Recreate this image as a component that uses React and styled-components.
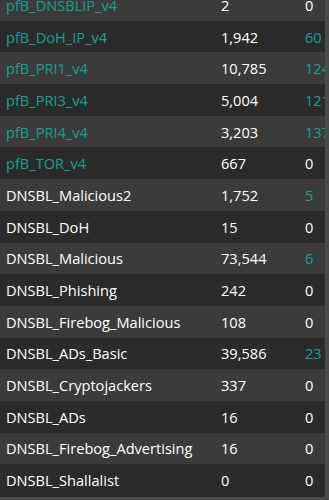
import React from "react";
import styled, { createGlobalStyle } from "styled-components";

const GlobalStyle = createGlobalStyle`
  html, body {
    margin: 0;
    padding: 0;
    background: #4a4a4a;
  }
`;

const Frame = styled.div`
  width: 325px;
  height: 497px;
  overflow: hidden;
  background: #2b2b2b;
  font-family: "Open Sans", "Noto Sans", sans-serif;
  font-size: 14.6px;
`;

const Table = styled.div`
  margin-top: -11px;
`;

const Row = styled.div`
  display: grid;
  grid-template-columns: 215px 84px 40px;
  align-items: center;
  height: 31.7px;
  padding-left: 6px;
  background: ${({ odd }) => (odd ? "#3b3b3b" : "#2b2b2b")};
  white-space: nowrap;
`;

const Cell = styled.span`
  color: ${({ teal }) => (teal ? "#14a091" : "#ffffff")};
  overflow: hidden;
`;

const rows = [
  ["pfB_DNSBLIP_v4", "2", "0", true],
  ["pfB_DoH_IP_v4", "1,942", "60", true],
  ["pfB_PRI1_v4", "10,785", "124", true],
  ["pfB_PRI3_v4", "5,004", "121", true],
  ["pfB_PRI4_v4", "3,203", "137", true],
  ["pfB_TOR_v4", "667", "0", true],
  ["DNSBL_Malicious2", "1,752", "5", false],
  ["DNSBL_DoH", "15", "0", false],
  ["DNSBL_Malicious", "73,544", "6", false],
  ["DNSBL_Phishing", "242", "0", false],
  ["DNSBL_Firebog_Malicious", "108", "0", false],
  ["DNSBL_ADs_Basic", "39,586", "23", false],
  ["DNSBL_Cryptojackers", "337", "0", false],
  ["DNSBL_ADs", "16", "0", false],
  ["DNSBL_Firebog_Advertising", "16", "0", false],
  ["DNSBL_Shallalist", "0", "0", false],
];

export default function App() {
  return (
    <>
      <GlobalStyle />
      <Frame>
        <Table>
          {rows.map(([name, count, hits, pfb], i) => (
            <Row key={name} odd={i % 2 === 0}>
              <Cell teal={pfb}>{name}</Cell>
              <Cell>{count}</Cell>
              <Cell teal={hits !== "0"}>{hits}</Cell>
            </Row>
          ))}
        </Table>
      </Frame>
    </>
  );
}
